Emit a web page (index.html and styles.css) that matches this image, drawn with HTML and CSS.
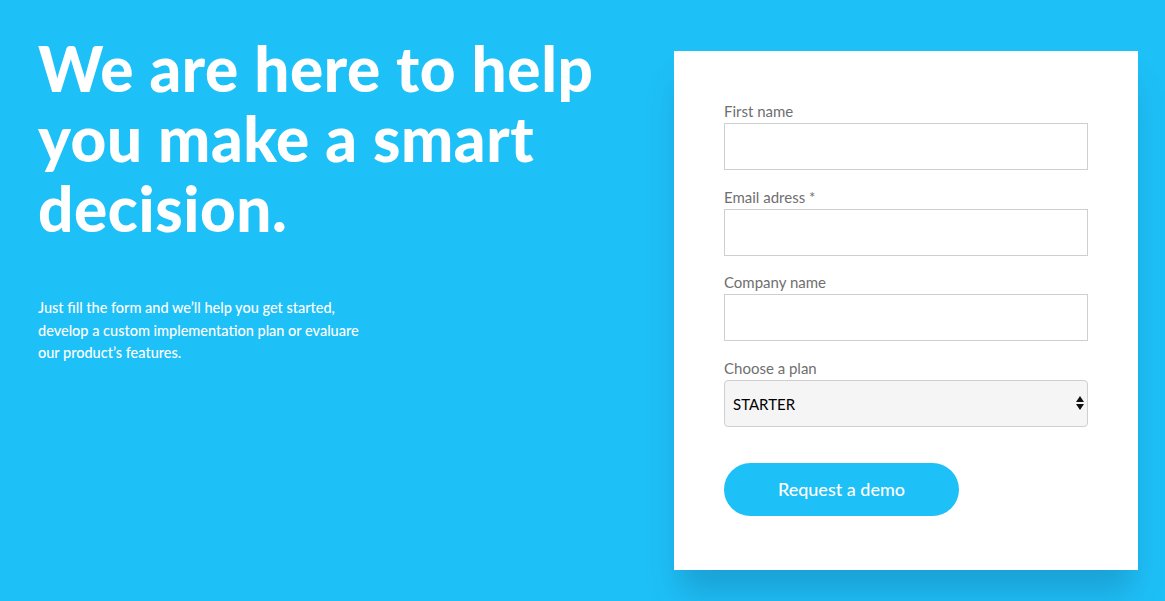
FILE: index.html
```html
<!DOCTYPE html>
<html lang="en">
<head>
<meta charset="utf-8">
<title>Request a demo</title>
<link rel="stylesheet" href="styles.css">
</head>
<body>
<main class="page">
  <section class="intro">
    <h1 class="title">We are here to help you make a smart decision.</h1>
    <p class="lead">Just fill the form and we’ll help you get started, develop a custom implementation plan or evaluare our product’s features.</p>
  </section>
  <form class="card">
    <label class="field">
      <span class="label">First name</span>
      <input class="input" type="text">
    </label>
    <label class="field">
      <span class="label">Email adress *</span>
      <input class="input" type="email">
    </label>
    <label class="field">
      <span class="label">Company name</span>
      <input class="input" type="text">
    </label>
    <label class="field">
      <span class="label">Choose a plan</span>
      <span class="select-wrap">
        <select class="select">
          <option>STARTER</option>
          <option>PRO</option>
          <option>ENTERPRISE</option>
        </select>
        <svg class="select-arrows" width="8" height="14" viewBox="0 0 8 14"><path d="M4 0 L8 6 L0 6 Z M0 8 L8 8 L4 14 Z" fill="#111"/></svg>
      </span>
    </label>
    <button class="btn" type="button">Request a demo</button>
  </form>
</main>
</body>
</html>
```
FILE: styles.css
```css
* { box-sizing: border-box; }
html, body { margin: 0; padding: 0; }
body {
  background: #1ec0f8;
  font-family: "Lato", "Open Sans", sans-serif;
  height: 601px;
  overflow: hidden;
}
.page {
  display: flex;
  justify-content: space-between;
  align-items: flex-start;
  padding: 0 27px 0 38px;
}
.intro {
  padding-top: 33px;
  width: 600px;
}
.title {
  margin: 0;
  color: #fff;
  font-size: 62px;
  line-height: 70px;
  font-weight: 900;
  letter-spacing: 0.6px;
}
.lead {
  margin: 54px 0 0;
  width: 330px;
  color: #fff;
  font-size: 14.5px;
  line-height: 22.5px;
  font-weight: 500;
}
.card {
  margin-top: 51px;
  width: 464px;
  height: 519px;
  background: #fff;
  padding: 51px 50px 0;
  display: flex;
  flex-direction: column;
  box-shadow: 0 28px 30px -6px rgba(20, 90, 130, 0.3);
}
.field {
  display: flex;
  flex-direction: column;
  margin-bottom: 17.7px;
}
.label {
  color: #6f6f6f;
  font-size: 15px;
  line-height: 19px;
  margin-bottom: 2px;
}
.input {
  height: 47px;
  border: 1px solid #cfcfcf;
  border-radius: 0;
  background: #fff;
  font: inherit;
  padding: 0 10px;
}
.select-wrap {
  position: relative;
  display: block;
}
.select {
  -webkit-appearance: none;
  appearance: none;
  width: 100%;
  height: 47px;
  border: 1px solid #cfcfcf;
  border-radius: 4px;
  background: #f5f5f5;
  font-family: inherit;
  font-size: 15px;
  color: #000;
  padding: 0 8px;
}
.select-arrows {
  position: absolute;
  right: 4px;
  top: 16px;
}
.btn {
  margin-top: 18px;
  width: 235px;
  height: 53px;
  border: 0;
  border-radius: 27px;
  background: #1ec0f8;
  color: #fff;
  font-family: inherit;
  font-size: 18px;
  font-weight: 500;
  cursor: pointer;
}
```
